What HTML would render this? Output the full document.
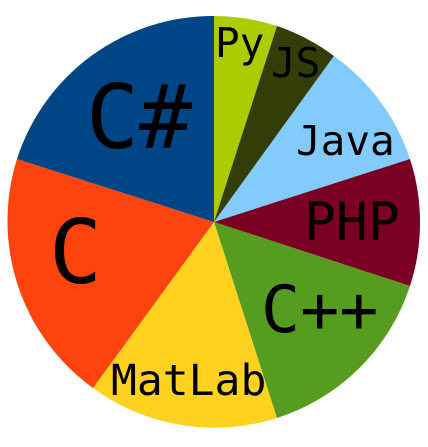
<!DOCTYPE html>
<html><head><style>
html,body{margin:0;padding:0;background:#fff;width:428px;height:447px;overflow:hidden}
text{font-family:"DejaVu Sans Mono","Liberation Mono",monospace;fill:#000}
</style></head><body>
<svg width="428" height="447" viewBox="0 0 428 447">
<g stroke="none">
<path d="M214 222 L214 16 A206 206 0 0 1 277 26 Z" fill="#aacc00"/>
<path d="M214 222 L277 26 A206 206 0 0 1 334 56 Z" fill="#333d07"/>
<path d="M214 222 L334 56 A206 206 0 0 1 410 159 Z" fill="#84cbfd"/>
<path d="M214 222 L410 159 A206 206 0 0 1 410 286 Z" fill="#790022"/>
<path d="M214 222 L410 286 A206 206 0 0 1 277 418 Z" fill="#559c1f"/>
<path d="M214 222 L277 418 A206 206 0 0 1 93 388 Z" fill="#fed21e"/>
<path d="M214 222 L93 388 A206 206 0 0 1 17 159 Z" fill="#fe440e"/>
<path d="M214 222 L17 159 A206 206 0 0 1 214 16 Z" fill="#004585"/>
</g>
<text x="215" y="57" font-size="41">Py</text>
<text x="271" y="77" font-size="41">JS</text>
<text x="296" y="155" font-size="41">Java</text>
<text x="304" y="240" font-size="53">PHP</text>
<text x="261" y="332" font-size="65">C++</text>
<text x="111" y="395" font-size="43">MatLab</text>
<text x="49" y="283" font-size="88">C</text>
<text x="86" y="148" font-size="88">C#</text>
</svg>
</body></html>
